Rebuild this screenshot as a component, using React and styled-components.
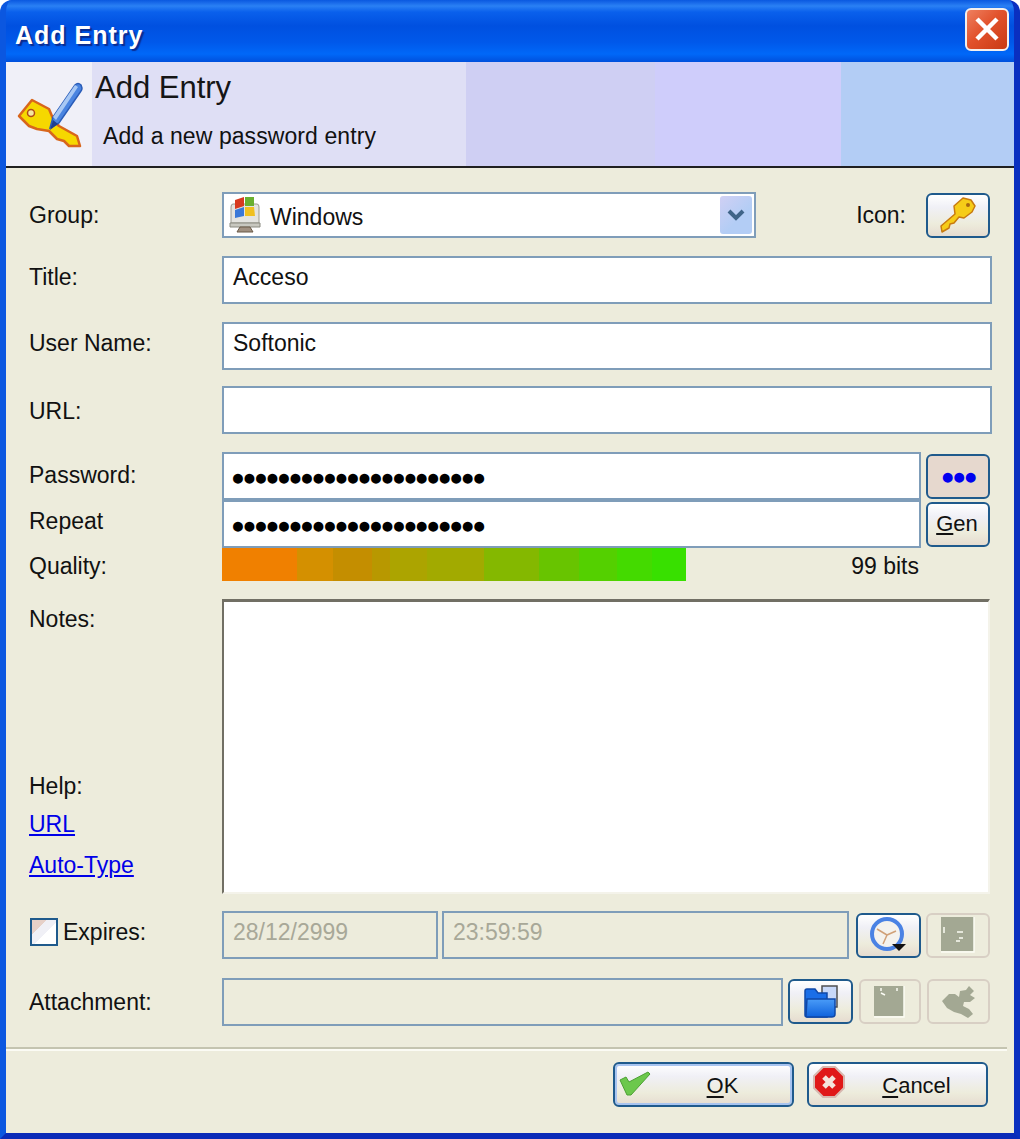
import React from "react";
import styled, { createGlobalStyle } from "styled-components";

const Global = createGlobalStyle`
  html, body {
    margin: 0;
    padding: 0;
    background: #fff;
  }
  body {
    font-family: "Liberation Sans", Arial, sans-serif;
  }
`;

const Window = styled.div`
  box-sizing: border-box;
  width: 1020px;
  height: 1139px;
  display: flex;
  flex-direction: column;
  overflow: hidden;
  border-radius: 12px 12px 0 0;
  background: #0a55dd;
  border-left: 6px solid #0b57e0;
  border-right: 6px solid #0a2fc0;
  border-bottom: 6px solid #0a2bb8;
`;

const TitleBar = styled.div`
  height: 62px;
  flex: none;
  margin: 0 -6px;
  padding: 0 6px 0 15px;
  display: flex;
  align-items: center;
  justify-content: space-between;
  background: linear-gradient(
    to bottom,
    #0a58e0 0,
    #2a80f4 6px,
    #0a60ec 12px,
    #0050e0 26px,
    #0058ea 42px,
    #0068f8 54px,
    #0050dc 62px
  );
`;

const TitleText = styled.div`
  color: #fff;
  font-size: 25px;
  font-weight: bold;
  letter-spacing: 1px;
  text-shadow: 2px 2px 1px #0a2c90;
  margin-top: 8px;
`;

const CloseButton = styled.div`
  width: 44px;
  height: 43px;
  margin: 0 5px 4px 0;
  box-sizing: border-box;
  display: flex;
  align-items: center;
  justify-content: center;
  border: 2px solid #f4f0ee;
  border-radius: 6px;
  background: linear-gradient(135deg, #ee8060 0, #e2522c 45%, #c93a14 100%);
`;

const Banner = styled.div`
  height: 104px;
  flex: none;
  display: flex;
  border-bottom: 2px solid #202020;
  background: linear-gradient(
    to right,
    #f0f0f8 0 86px,
    #dfdff5 86px 460px,
    #cfcff3 460px 649px,
    #cfcdfb 649px 835px,
    #b3cdf5 835px
  );
`;

const BannerIcon = styled.div`
  width: 86px;
  flex: none;
  display: flex;
  align-items: center;
  justify-content: center;
`;

const BannerText = styled.div`
  display: flex;
  flex-direction: column;
  padding-left: 3px;
`;

const BannerTitle = styled.div`
  font-size: 31px;
  line-height: 36px;
  margin-top: 8px;
  color: #151515;
`;

const BannerSub = styled.div`
  font-size: 23px;
  letter-spacing: 0.08px;
  line-height: 28px;
  margin: 16px 0 0 8px;
  color: #111;
`;

const Body = styled.div`
  flex: 1;
  display: flex;
  flex-direction: column;
  background: #edecdc;
  color: #111;
  font-size: 23px;
`;

const Form = styled.div`
  display: flex;
  flex-direction: column;
  padding: 0 22px 0 23px;
`;

const Row = styled.div`
  display: flex;
  align-items: center;
  height: ${(p) => p.$h}px;
  margin-top: ${(p) => p.$top || 0}px;
`;

const Label = styled.div`
  width: 193px;
  flex: none;
  margin-top: ${(p) => p.$shift || 0}px;
`;

const Field = styled.div`
  box-sizing: border-box;
  height: ${(p) => p.$h || 48}px;
  ${(p) => (p.$w ? `width: ${p.$w}px; flex: none;` : "flex: 1;")}
  margin-right: ${(p) => p.$mr || 0}px;
  border: 2px solid #7f9db9;
  background: ${(p) => (p.$off ? "#edecdc" : "#fff")};
  color: ${(p) => (p.$off ? "#a8a898" : "#111")};
  padding-left: 9px;
  display: flex;
  align-items: center;
  padding-bottom: 5px;
`;

const Dots = styled.span`
  font-size: 23px;
  letter-spacing: -2.4px;
  color: #000;
  margin-left: -2px;
  padding-top: 8px;
`;

const ComboField = styled(Field)`
  padding-left: 5px;
  padding-right: 2px;
  padding-bottom: 0;
  gap: 9px;
`;

const ComboText = styled.span`
  flex: 1;
  padding-top: 4px;
`;

const ComboArrow = styled.div`
  width: 32px;
  height: 38px;
  border-radius: 3px;
  display: flex;
  align-items: center;
  justify-content: center;
  background: linear-gradient(135deg, #d0d0f4, #b3cdf5 60%);
`;

const IconLabel = styled.span`
  margin: 0 20px 0 auto;
`;

const ToolButton = styled.div`
  box-sizing: border-box;
  width: ${(p) => p.$w || 64}px;
  height: 45px;
  flex: none;
  margin-left: ${(p) => p.$ml || 0}px;
  margin-right: 2px;
  display: flex;
  align-items: center;
  justify-content: center;
  border-radius: 6px;
  border: 2px solid ${(p) => (p.$off ? "#d8cfc4" : "#1f5a8c")};
  background: ${(p) =>
    p.$off
      ? "#edecdc"
      : p.$down
        ? "#e6d8ce"
        : "linear-gradient(to bottom, #fff 0, #f0f0f6 30%, #edecdc 70%, #e6dcd0 100%)"};
`;

const GenText = styled.span`
  font-size: 22px;
  margin-left: -2px;
  u {
    text-underline-offset: 2px;
  }
`;

const BlueDots = styled.span`
  color: #0000f0;
  font-size: 23px;
  letter-spacing: -2.4px;
`;

const QualityBar = styled.div`
  width: 464px;
  height: 33px;
  flex: none;
  background: linear-gradient(
    to right,
    #f08000 0 75px,
    #d49000 75px 111px,
    #c48e00 111px 150px,
    #b89800 150px 168px,
    #aca400 168px 205px,
    #a2aa00 205px 262px,
    #84b800 262px 317px,
    #68c400 317px 357px,
    #54d000 357px 395px,
    #44da00 395px 430px,
    #38e000 430px
  );
`;

const Bits = styled.span`
  margin: 4px 73px 0 auto;
`;

const NotesRow = styled.div`
  display: flex;
  height: 295px;
  margin-top: 18px;
`;

const NotesSide = styled.div`
  width: 193px;
  flex: none;
  display: flex;
  flex-direction: column;
  padding-top: 7px;
`;

const HelpBlock = styled.div`
  margin-top: auto;
  display: flex;
  flex-direction: column;
  gap: 14px;
  padding-bottom: 15px;
`;

const HelpTitle = styled.div`
  margin-bottom: -3px;
`;

const HelpLink = styled.a`
  color: #0000e8;
  text-decoration: underline;
`;

const NotesBox = styled.div`
  flex: 1;
  margin-right: 2px;
  background: #fff;
  border-top: 3px solid #716f64;
  border-left: 2px solid #716f64;
  border-right: 2px solid #f4f3ea;
  border-bottom: 2px solid #f4f3ea;
`;

const CheckWrap = styled.div`
  width: 193px;
  flex: none;
  display: flex;
  align-items: center;
  gap: 5px;
  margin-top: -6px;
`;

const CheckBox = styled.div`
  box-sizing: border-box;
  width: 28px;
  height: 28px;
  margin-left: 1px;
  border: 2px solid #1f5a8c;
  background: linear-gradient(135deg, #e6d0c8 0 30%, #f0f0f6 30% 55%, #fff 55%);
`;

const Separator = styled.div`
  margin-top: 21px;
  margin-right: 7px;
  height: 2px;
  background: #c4c4b0;
  border-bottom: 2px solid #fbfbf4;
`;

const Footer = styled.div`
  display: flex;
  justify-content: flex-end;
  gap: 13px;
  padding: 11px 26px 0 0;
`;

const DialogButton = styled.div`
  box-sizing: border-box;
  width: 181px;
  height: 45px;
  position: relative;
  display: flex;
  align-items: center;
  justify-content: center;
  padding: 3px 0 0 38px;
  font-size: 22px;
  border-radius: 6px;
  border: 2px solid #1f5a8c;
  background: linear-gradient(to bottom, #fff 0, #f0f0f6 30%, #edecdc 70%, #e6dcd0 100%);
  box-shadow: ${(p) => (p.$primary ? "inset 0 0 0 2px #a8c4f0" : "none")};
  u {
    text-underline-offset: 3px;
  }
`;

const ButtonGlyph = styled.div`
  position: absolute;
  left: ${(p) => p.$left}px;
  top: ${(p) => p.$top}px;
  display: flex;
`;

const KeyPenIcon = () => (
  <svg width="68" height="68" viewBox="0 0 68 68">
    <path
      d="M4 36 L17 20 L34 29 L39 41 L44 46 L62 56 L65 66 L54 66 L49 61 L42 59 L34 51 L22 49 L14 46 Z"
      fill="#f6d800"
      stroke="#d8661c"
      strokeWidth="2.5"
      strokeLinejoin="round"
    />
    <circle cx="16" cy="33" r="3.5" fill="#f4e8a0" stroke="#b04a18" strokeWidth="1.5" />
    <path d="M35 48 L38 37 L60 5 Q63 2 66 5 L67 8 Q67 10 66 11 L44 43 Z" fill="#4a84e0" stroke="#2a5cb8" strokeWidth="1.5" />
    <path d="M38 37 L60 5 L63 7 L41 40 Z" fill="#a8c8f4" />
    <path d="M35 50 L38 40 L43 44 Z" fill="#1f3f90" />
  </svg>
);

const WindowsIcon = () => (
  <svg width="32" height="38" viewBox="0 0 32 38">
    <path d="M4 8 H28 Q30 8 30 11 V27 H2 V11 Q2 8 4 8 Z" fill="#e4e4e0" stroke="#9a9a90" />
    <path d="M1 27 H31 V31 H1 Z" fill="#c8c8c0" stroke="#8a8a80" />
    <path d="M11 31 H21 L24 36 H8 Z" fill="#a09080" stroke="#6a5a48" />
    <path d="M6 4 L15 1 L15 10 L6 13 Z" fill="#d83a20" />
    <path d="M16 1 L25 1 L25 10 L16 10 Z" fill="#6ab030" />
    <path d="M6 14 L15 11 L15 20 L6 22 Z" fill="#3a78d8" />
    <path d="M16 11 L25 11 L26 20 L16 20 Z" fill="#f0c020" />
  </svg>
);

const ChevronIcon = () => (
  <svg width="20" height="14" viewBox="0 0 20 14">
    <path d="M3 3 L10 10 L17 3" fill="none" stroke="#3f6488" strokeWidth="4" />
  </svg>
);

const SmallKeyIcon = () => (
  <svg width="36" height="36" viewBox="0 0 36 36">
    <path
      d="M2 35 L1 29 L15 17 L14 9 L23 1 L31 3 L35 9 L32 15 L24 21 L19 20 L14 26 L10 27 L9 31 Z"
      fill="#f6cc18"
      stroke="#c87a10"
      strokeWidth="1.5"
      strokeLinejoin="round"
    />
    <circle cx="28" cy="8" r="2" fill="#a86810" />
  </svg>
);

const ClockIcon = () => (
  <svg width="38" height="38" viewBox="0 0 38 38">
    <circle cx="17" cy="18" r="15" fill="#f4f2ee" stroke="#4a82e4" strokeWidth="4" />
    <path d="M17 19 L7 13 M17 19 L26 15 M17 19 L13 28" stroke="#d0a078" strokeWidth="1.5" />
    <path d="M22 28 H36 L29 35 Z" fill="#111" />
  </svg>
);

const FolderIcon = () => (
  <svg width="36" height="34" viewBox="0 0 36 34">
    <defs>
      <linearGradient id="folderFront" x1="0" y1="0" x2="0" y2="1">
        <stop offset="0" stopColor="#4a9cf8" />
        <stop offset="1" stopColor="#0f62dc" />
      </linearGradient>
    </defs>
    <rect x="19" y="1" width="15" height="21" fill="#c8d8f8" stroke="#505050" strokeWidth="1.5" />
    <path d="M2 6 Q2 4 4 4 H12 L15 8 H24 V32 H4 Q2 32 2 30 Z" fill="#1a6ee8" stroke="#0f48a8" strokeWidth="1.5" />
    <path d="M4 14 H32 V29 Q32 32 29 32 H4 Q3 32 3 30 Z" fill="url(#folderFront)" stroke="#0f48a8" strokeWidth="1.5" />
  </svg>
);

const DisabledDocIcon = () => (
  <svg width="34" height="36" viewBox="0 0 34 36">
    <rect x="0" y="0" width="33" height="34" fill="#a3a893" />
    <path d="M33 0 V35 H0" fill="none" stroke="#fbfbf4" strokeWidth="1.5" />
    <path d="M3 10 V16 M16 15 H22 M18 21 H22 M15 24 H19" stroke="#fbfbf4" strokeWidth="1.5" />
  </svg>
);

const DisabledDiskIcon = () => (
  <svg width="32" height="32" viewBox="0 0 32 32">
    <rect x="0" y="0" width="30" height="30" fill="#a3a893" />
    <path d="M30 0 V31 H0" fill="none" stroke="#fbfbf4" strokeWidth="1.5" />
    <path d="M7 2 V5 M7 7 L11 9 M23 2 V5" stroke="#fbfbf4" strokeWidth="1.5" />
  </svg>
);

const DisabledToolIcon = () => (
  <svg width="36" height="34" viewBox="0 0 36 34">
    <path
      d="M1 16 L8 9 L14 9 L18 12 L19 6 L25 5 L28 1 L33 6 L29 10 L34 13 L29 17 L23 17 L22 21 L28 24 L32 29 L27 33 L20 29 L13 27 L6 23 Z"
      fill="#a3a893"
    />
  </svg>
);

const CheckIcon = () => (
  <svg width="32" height="26" viewBox="0 0 32 26">
    <path d="M1 9 L7 6 L10 11 L29 1 L31 3 L12 24 L8 24 Z" fill="#6cc84c" stroke="#4ca034" strokeWidth="1" />
  </svg>
);

const CancelIcon = () => (
  <svg width="32" height="32" viewBox="0 0 32 32">
    <path
      d="M10 1 H22 L31 10 V22 L22 31 H10 L1 22 V10 Z"
      fill="#e01818"
      stroke="#d8b8b0"
      strokeLinejoin="round"
      strokeWidth="2"
    />
    <path d="M11 11 L21 21 M21 11 L11 21" stroke="#f4e4dc" strokeWidth="5" />
  </svg>
);

const CloseIcon = () => (
  <svg width="26" height="26" viewBox="0 0 26 26">
    <path d="M3 3 L23 23 M23 3 L3 23" stroke="#fff" strokeWidth="4.5" />
  </svg>
);

const PASSWORD = "●".repeat(22);

const App = () => {
  return (
    <>
      <Global />
      <Window>
        <TitleBar>
          <TitleText>Add Entry</TitleText>
          <CloseButton>
            <CloseIcon />
          </CloseButton>
        </TitleBar>
        <Banner>
          <BannerIcon>
            <KeyPenIcon />
          </BannerIcon>
          <BannerText>
            <BannerTitle>Add Entry</BannerTitle>
            <BannerSub>Add a new password entry</BannerSub>
          </BannerText>
        </Banner>
        <Body>
          <Form>
            <Row $h={46} $top={24}>
              <Label>Group:</Label>
              <ComboField $w={534} $h={46}>
                <WindowsIcon />
                <ComboText>Windows</ComboText>
                <ComboArrow>
                  <ChevronIcon />
                </ComboArrow>
              </ComboField>
              <IconLabel>Icon:</IconLabel>
              <ToolButton>
                <SmallKeyIcon />
              </ToolButton>
            </Row>
            <Row $h={48} $top={18}>
              <Label $shift={-6}>Title:</Label>
              <Field>Acceso</Field>
            </Row>
            <Row $h={48} $top={18}>
              <Label $shift={-6}>User Name:</Label>
              <Field>Softonic</Field>
            </Row>
            <Row $h={48} $top={16}>
              <Label $shift={2}>URL:</Label>
              <Field />
            </Row>
            <Row $h={48} $top={18}>
              <Label $shift={-2}>Password:</Label>
              <Field>
                <Dots>{PASSWORD}</Dots>
              </Field>
              <ToolButton $ml={5} $down>
                <BlueDots>●●●</BlueDots>
              </ToolButton>
            </Row>
            <Row $h={48}>
              <Label $shift={-6}>Repeat</Label>
              <Field>
                <Dots>{PASSWORD}</Dots>
              </Field>
              <ToolButton $ml={5}>
                <GenText>
                  <u>G</u>en
                </GenText>
              </ToolButton>
            </Row>
            <Row $h={33}>
              <Label $shift={4}>Quality:</Label>
              <QualityBar />
              <Bits>99 bits</Bits>
            </Row>
            <NotesRow>
              <NotesSide>
                <div>Notes:</div>
                <HelpBlock>
                  <HelpTitle>Help:</HelpTitle>
                  <HelpLink href="#">URL</HelpLink>
                  <HelpLink href="#">Auto-Type</HelpLink>
                </HelpBlock>
              </NotesSide>
              <NotesBox />
            </NotesRow>
            <Row $h={48} $top={17}>
              <CheckWrap>
                <CheckBox />
                <span>Expires:</span>
              </CheckWrap>
              <Field $off $w={216} $mr={4}>
                28/12/2999
              </Field>
              <Field $off>23:59:59</Field>
              <ToolButton $ml={7} $w={65}>
                <ClockIcon />
              </ToolButton>
              <ToolButton $off $ml={3} $w={64}>
                <DisabledDocIcon />
              </ToolButton>
            </Row>
            <Row $h={49} $top={18}>
              <Label $shift={2}>Attachment:</Label>
              <Field $off />
              <ToolButton $ml={5} $w={65}>
                <FolderIcon />
              </ToolButton>
              <ToolButton $off $ml={4} $w={62}>
                <DisabledDiskIcon />
              </ToolButton>
              <ToolButton $off $ml={4} $w={63}>
                <DisabledToolIcon />
              </ToolButton>
            </Row>
          </Form>
          <Separator />
          <Footer>
            <DialogButton $primary>
              <ButtonGlyph $left={4} $top={7}>
                <CheckIcon />
              </ButtonGlyph>
              <span>
                <u>O</u>K
              </span>
            </DialogButton>
            <DialogButton>
              <ButtonGlyph $left={4} $top={2}>
                <CancelIcon />
              </ButtonGlyph>
              <span>
                <u>C</u>ancel
              </span>
            </DialogButton>
          </Footer>
        </Body>
      </Window>
    </>
  );
};

export default App;
